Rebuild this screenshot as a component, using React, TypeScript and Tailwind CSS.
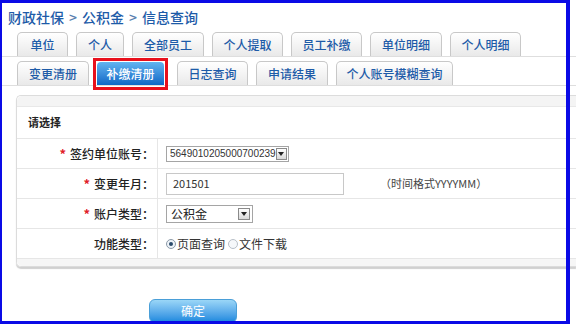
import React from "react";

const topTabs = [
  { label: "单位", w: "w-[51px]" },
  { label: "个人", w: "w-[48px]" },
  { label: "全部员工", w: "w-[72px]" },
  { label: "个人提取", w: "w-[71px]" },
  { label: "员工补缴", w: "w-[71px]" },
  { label: "单位明细", w: "w-[72px]" },
  { label: "个人明细", w: "w-[71px]" },
];

function Tab({ label, w, extra = "" }: { label: string; w: string; extra?: string }) {
  return (
    <div
      className={`${w} ${extra} h-[24px] flex items-center justify-center rounded-t-[5px] border border-b-0 border-[#c8c8c8] bg-linear-to-b from-white to-[#e9e9e9] text-[12px] font-medium text-[#1d5ba8]`}
    >
      {label}
    </div>
  );
}

function Row({ label, required, children }: { label: string; required?: boolean; children: React.ReactNode }) {
  return (
    <div className="flex h-[30px] border-t border-[#e6e6e6]">
      <div className="w-[141px] border-r border-[#e6e6e6] flex items-center justify-end pr-[3px] text-[12px] font-medium text-[#222]">
        {required && <span className="text-[#e0202a] text-[13px] mr-[4px] font-bold">*</span>}
        {label}：
      </div>
      <div className="flex-1 flex items-center pl-[8px]">{children}</div>
    </div>
  );
}

function DropBtn() {
  return (
    <span className="w-[12px] h-[12px] border border-[#8a8a8a] bg-linear-to-b from-white to-[#d8d8d8] flex items-center justify-center">
      <svg width="6" height="4" viewBox="0 0 6 4">
        <path d="M0 0h6L3 4z" fill="#222" />
      </svg>
    </span>
  );
}

export default function App() {
  return (
    <div className="relative w-[576px] h-[324px] overflow-hidden bg-white font-['Noto_Sans_CJK_SC',sans-serif]">
      {/* breadcrumb */}
      <div className="h-[32px] pl-[8px] pt-[7px] flex gap-[5px] text-[14px] font-medium text-[#1d5ba8]">
        <span>财政社保</span>
        <span className="text-[#5a7fb0]">&gt;</span>
        <span>公积金</span>
        <span className="text-[#5a7fb0]">&gt;</span>
        <span>信息查询</span>
      </div>

      {/* tabs row 1 */}
      <div className="flex items-end gap-[8px] pl-[17px] h-[25px] border-b border-[#dedede]">
        {topTabs.map((t) => (
          <Tab key={t.label} label={t.label} w={t.w} />
        ))}
      </div>

      {/* tabs row 2 */}
      <div className="flex items-end gap-[8px] pl-[17px] mt-[4px] h-[25px] border-b border-[#dedede]">
        <Tab label="变更清册" w="w-[72px]" />
        <div className="relative w-[67px] h-[23px] flex items-center justify-center rounded-t-[4px] bg-linear-to-b from-[#62b4f0] to-[#0b68c6] text-[12px] font-medium text-white">
          补缴清册
          <div className="absolute -left-[4px] -top-[4px] -right-[4px] -bottom-[5px] border-[3px] border-[#e8101c]" />
        </div>
        <Tab label="日志查询" w="w-[71px]" extra="ml-[5px]" />
        <Tab label="申请结果" w="w-[72px]" />
        <Tab label="个人账号模糊查询" w="w-[117px]" />
      </div>

      {/* panel */}
      <div className="ml-[16px] mt-[9px] rounded-tl-[5px] rounded-bl-[5px] border border-r-0 border-[#dcdcdc] shadow-[0_2px_1px_#d0d0d0]">
        <div className="h-[11px] bg-[#f4f4f4] rounded-tl-[5px] border-b border-[#e8e8e8]" />
        <div className="h-[31px] flex items-center pl-[11px] text-[11px] font-bold text-[#222]">请选择</div>
        <Row label="签约单位账号" required>
          <div className="w-[123px] h-[16px] border border-[#a5a5a5] flex items-center justify-between pl-[3px] pr-[1px] text-[10px] text-[#333] font-['Liberation_Sans',sans-serif]">
            <span>5649010205000700239</span>
            <DropBtn />
          </div>
        </Row>
        <Row label="变更年月" required>
          <div className="w-[178px] h-[22px] border border-[#c8c8c8] flex items-center pl-[6px] text-[11px] text-[#333]">201501</div>
          <span className="ml-[36px] text-[11px] text-[#444]">（时间格式YYYYMM）</span>
        </Row>
        <Row label="账户类型" required>
          <div className="w-[87px] h-[18px] border border-[#a5a5a5] flex items-center justify-between pl-[4px] pr-[2px] text-[12px] text-[#222]">
            <span>公积金</span>
            <DropBtn />
          </div>
        </Row>
        <Row label="功能类型">
          <div className="flex items-center text-[12px] text-[#333]">
            <span className="w-[10px] h-[10px] rounded-full border border-[#8c9aa8] bg-[#eef3f8] flex items-center justify-center mr-[1px]">
              <span className="w-[4px] h-[4px] rounded-full bg-[#2a4a6a]" />
            </span>
            页面查询
            <span className="w-[10px] h-[10px] rounded-full border border-[#b8c0c8] bg-[#f6f8fa] ml-[3px] mr-[1px]" />
            文件下载
          </div>
        </Row>
        <div className="h-[8px] bg-[#f6f6f6] border-t border-[#e6e6e6] rounded-bl-[5px]" />
      </div>

      {/* submit */}
      <div className="pl-[149px] mt-[30px]">
        <button className="w-[88px] h-[24px] rounded-[6px] border border-[#4a9fd8] bg-linear-to-b from-[#9ad6f7] to-[#1689de] text-[12px] text-white">
          确定
        </button>
      </div>

      {/* blue highlight frame */}
      <div className="absolute left-0 top-0 w-[570px] h-[324px] border-l-[2px] border-t-[3px] border-r-[4px] border-b-[3px] border-[#0a0ae6] pointer-events-none" />
    </div>
  );
}
